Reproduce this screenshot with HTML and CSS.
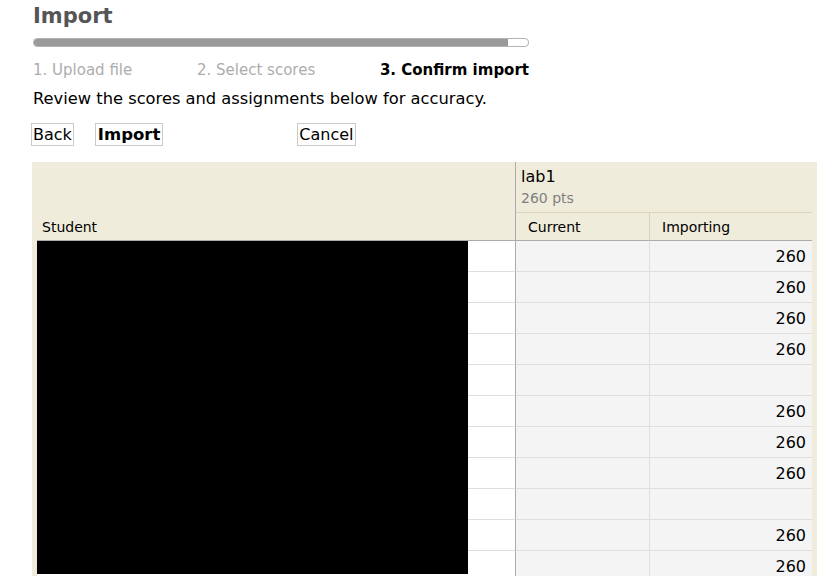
FILE: index.html
```html
<!DOCTYPE html>
<html>
<head>
<meta charset="utf-8">
<title>Import</title>
<link rel="stylesheet" href="styles.css">
</head>
<body>
<div class="page">
  <div class="wizard">
    <h1 class="title">Import</h1>
    <div class="progress"><div class="progress-fill" style="width: 96%"></div></div>
    <ol class="steps">
      <li class="step">1. Upload file</li>
      <li class="step">2. Select scores</li>
      <li class="step step-current">3. Confirm import</li>
    </ol>
  </div>
  <p class="intro">Review the scores and assignments below for accuracy.</p>
  <div class="actions">
    <button class="btn">Back</button>
    <button class="btn btn-primary">Import</button>
    <button class="btn btn-cancel">Cancel</button>
  </div>

  <div class="grid-wrap">
    <table class="grid">
      <colgroup>
        <col class="col-student">
        <col class="col-current">
        <col class="col-importing">
      </colgroup>
      <thead>
        <tr>
          <th class="h-student" rowspan="2">Student</th>
          <th class="h-assignment" colspan="2">
            <div class="a-name">lab1</div>
            <div class="a-pts">260 pts</div>
          </th>
        </tr>
        <tr>
          <th class="h-sub h-current">Current</th>
          <th class="h-sub h-importing">Importing</th>
        </tr>
      </thead>
      <tbody>
        <tr><td class="c-student"></td><td class="c-current"></td><td class="c-importing">260</td></tr>
        <tr><td class="c-student"></td><td class="c-current"></td><td class="c-importing">260</td></tr>
        <tr><td class="c-student"></td><td class="c-current"></td><td class="c-importing">260</td></tr>
        <tr><td class="c-student"></td><td class="c-current"></td><td class="c-importing">260</td></tr>
        <tr><td class="c-student"></td><td class="c-current"></td><td class="c-importing"></td></tr>
        <tr><td class="c-student"></td><td class="c-current"></td><td class="c-importing">260</td></tr>
        <tr><td class="c-student"></td><td class="c-current"></td><td class="c-importing">260</td></tr>
        <tr><td class="c-student"></td><td class="c-current"></td><td class="c-importing">260</td></tr>
        <tr><td class="c-student"></td><td class="c-current"></td><td class="c-importing"></td></tr>
        <tr><td class="c-student"></td><td class="c-current"></td><td class="c-importing">260</td></tr>
        <tr><td class="c-student"></td><td class="c-current"></td><td class="c-importing">260</td></tr>
      </tbody>
    </table>
    <div class="redaction"></div>
  </div>
</div>
</body>
</html>
```

FILE: styles.css
```css
html, body {
  margin: 0;
  padding: 0;
  background: #fff;
}

body {
  font-family: "DejaVu Sans", Verdana, sans-serif;
  color: #000;
  overflow: hidden;
}

.page {
  padding: 3px 0 0 33px;
}

.wizard {
  width: 496px;
}

.title {
  margin: 0;
  font-size: 21px;
  line-height: 26px;
  font-weight: bold;
  color: #555;
}

.progress {
  margin-top: 9px;
  height: 9px;
  box-sizing: border-box;
  border: 1px solid #b4b4b4;
  border-radius: 4px;
  background: #fff;
  overflow: hidden;
}

.progress-fill {
  height: 100%;
  background: #9a9a9a;
}

.steps {
  list-style: none;
  margin: 14px 0 0 0;
  padding: 0;
  display: flex;
  justify-content: space-between;
  font-size: 15px;
  line-height: 18px;
}

.step {
  color: #adadad;
}

.step-current {
  color: #000;
  font-weight: bold;
}

.intro {
  margin: 10px 0 0 0;
  font-size: 16.3px;
  line-height: 19px;
}

.actions {
  margin: 15px 0 0 -2px;
  display: flex;
  align-items: center;
}

.btn {
  font-family: "DejaVu Sans", Verdana, sans-serif;
  font-size: 16px;
  line-height: 20px;
  height: 23px;
  padding: 0 1px;
  margin: 0;
  border: 1px solid #cacaca;
  background: #fff;
  color: #000;
  box-sizing: border-box;
}

.btn-primary {
  font-weight: bold;
  font-size: 16.5px;
  padding: 0 2px;
  margin-left: 21px;
}

.btn-cancel {
  margin-left: 134px;
}

.grid-wrap {
  position: relative;
  margin: 16px 0 0 -1px;
  width: 775px;
  padding: 0 5px;
  background: #f0ecdb;
}

.grid {
  width: 775px;
  table-layout: fixed;
  border-collapse: separate;
  border-spacing: 0;
}

.col-student { width: 479px; }
.col-current { width: 134px; }
.col-importing { width: 162px; }

th,
td {
  box-sizing: border-box;
  padding: 0;
  text-align: left;
  font-weight: normal;
}

.h-student {
  vertical-align: bottom;
  font-size: 14px;
  line-height: 17px;
  padding: 0 0 4px 5px;
  border-right: 1px solid #ababab;
  border-bottom: 1px solid #ababab;
}

.h-assignment {
  height: 51px;
  padding: 5px 0 2px 5px;
  vertical-align: top;
  border-bottom: 1px solid #d9d4bd;
}

.a-name {
  font-size: 16px;
  line-height: 19px;
}

.a-pts {
  font-size: 14px;
  line-height: 24px;
  color: #808080;
}

.h-sub {
  height: 28px;
  font-size: 14px;
  line-height: 17px;
  padding: 6px 0 4px 12px;
  vertical-align: top;
  border-bottom: 1px solid #ababab;
}

.h-current {
  border-right: 1px solid #d9d4bd;
}

.c-student,
.c-current,
.c-importing {
  height: 31px;
  border-bottom: 1px solid #dedede;
  vertical-align: middle;
}

.c-student {
  background: #fff;
  border-right: 1px solid #ababab;
}

.c-current {
  background: #f4f4f4;
  border-right: 1px solid #dedede;
}

.c-importing {
  background: #f4f4f4;
  text-align: right;
  font-size: 16px;
  line-height: 19px;
  padding-right: 6px;
}

.redaction {
  position: absolute;
  left: 5px;
  top: 79px;
  width: 431px;
  height: 333px;
  background: #000;
}
```
